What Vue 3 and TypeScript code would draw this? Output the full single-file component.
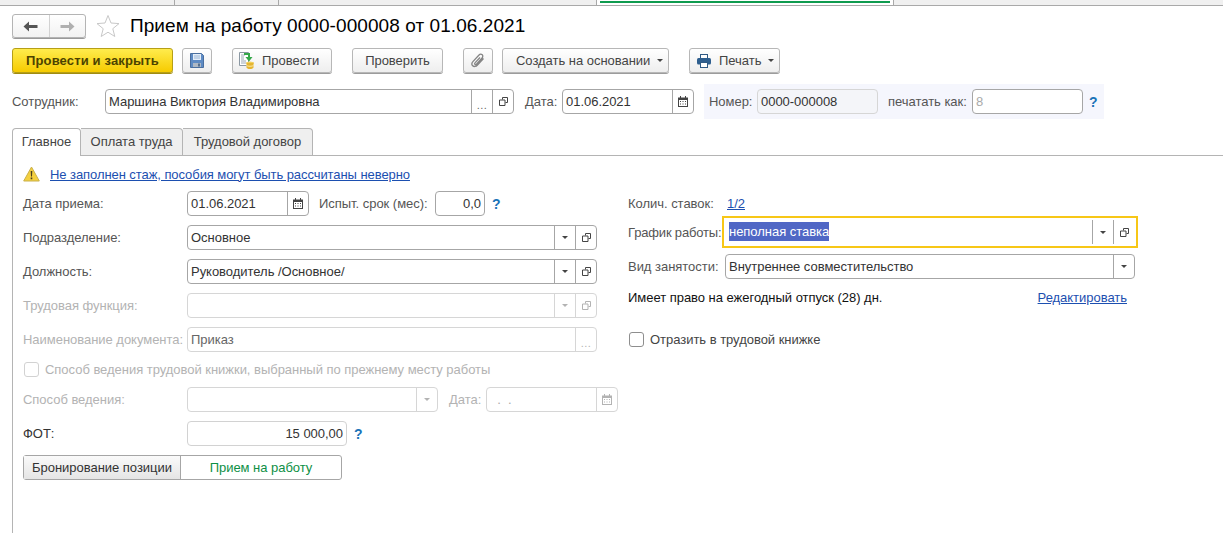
<script setup lang="ts">
const topTabs: number[] = [175, 104, 318, 297]
</script>

<template>
  <div class="page">
    <div class="strip">
      <div v-for="(w, i) in topTabs" :key="i" class="strip-tab" :class="{ current: i === 3 }" :style="{ width: w + 'px' }"><i v-if="i === 3"></i></div>
    </div>

    <div class="head">
      <div class="nav">
        <span class="nav-b">
          <svg width="15" height="11" viewBox="0 0 15 11"><path d="M0.500 5.500L6 .5v3.500h8.500v3H6v3.500z" fill="#555"/></svg>
        </span>
        <span class="nav-b">
          <svg width="15" height="11" viewBox="0 0 15 11"><path d="M14.500 5.500L9 .5v3.500H.5v3H9v3.500z" fill="#b0b0b0"/></svg>
        </span>
      </div>
      <svg class="star" width="24" height="24" viewBox="0 0 24 24"><path d="M12 1.500l3 7.500 8 .6-6.200 5.100 2 7.800L12 18.200l-6.800 4.300 2-7.800L1 9.600l8-.6z" fill="#fff" stroke="#c8c8c8"/></svg>
      <h1 class="title">Прием на работу 0000-000008 от 01.06.2021</h1>
    </div>

    <div class="toolbar">
      <button class="b primary" style="width:161px">Провести и закрыть</button>
      <button class="b" style="width:30px;margin-left:9px">
        <svg width="14" height="15" viewBox="0 0 14 15"><path d="M.5.5h11l2 2v12H.5z" fill="#5e8bc4" stroke="#4a6f9f"/><rect x="3" y="1" width="8" height="6" fill="#e3edf8"/><path d="M4 3h6M4 5h6" stroke="#9db6d4"/><rect x="3" y="10" width="8" height="4" fill="#aeb8c4"/><rect x="8" y="10.500" width="2" height="3" fill="#56708f"/></svg>
      </button>
      <button class="b start with-ic" style="width:100px;margin-left:20px">
        <svg width="17" height="17" viewBox="0 0 17 17"><path d="M.5.5h9v13h-9z" fill="#fff" stroke="#8b98a3"/><path d="M2 3h4M2 5h3M2 7h3M2 9h5M2 11h5" stroke="#9aa8b5"/><path d="M5 1h6v4h2.500l-3.500 4.500L6.500 5H9V3H5z" fill="#35a84a"/><path d="M7 10.500h8v1H7z" fill="#e9c04a"/><ellipse cx="11" cy="11" rx="3.500" ry="1.500" fill="#f1cf5c"/><path d="M7.500 11v4.500c0 .8 1.600 1.500 3.500 1.500s3.500-.7 3.500-1.500V11z" fill="#e5b530"/><path d="M7.500 13.500c1 1 6 1 7 0" stroke="#fbe9a6" fill="none"/></svg>
        <span>Провести</span>
      </button>
      <button class="b" style="width:91px;margin-left:20px">Проверить</button>
      <button class="b" style="width:30px;margin-left:20px">
        <svg width="14" height="15" viewBox="0 0 14 15"><path d="M12.500 5.500L6.500 12c-1.500 1.700-3.700 1.900-4.800.8-1.100-1.100-.9-3 .4-4.400l5.700-6.100c1-1.100 2.500-1.300 3.400-.5.900.8.700 2.300-.3 3.400L5.600 11c-.6.600-1.300.7-1.700.3-.4-.4-.3-1.100.3-1.700L9 4.500" fill="none" stroke="#858585" stroke-width="1.300"/></svg>
      </button>
      <button class="b start with-menu create" style="width:167px;margin-left:9px">
        <span>Создать на основании</span><i class="tri"></i>
      </button>
      <button class="b start with-menu print" style="width:91px;margin-left:20px">
        <svg width="14" height="14" viewBox="0 0 14 14"><rect x="3.500" y=".5" width="7" height="4" fill="#fff" stroke="#2f5a85"/><rect x="0" y="4" width="14" height="6.500" rx="1.500" fill="#2f5f8f"/><rect x="3.500" y="8.500" width="7" height="5" fill="#fff" stroke="#2f5a85"/></svg>
        <span class="print-t">Печать</span><i class="tri"></i>
      </button>
    </div>

    <div class="doc-row">
      <label class="lab emp-l">Сотрудник:</label>
      <div class="f" style="width:409px">
        <span class="v">Маршина Виктория Владимировна</span>
        <span class="s dots">...</span>
        <span class="s"><svg class="pick" width="9" height="9" viewBox="0 0 9 9"><path d="M3.500 2.500V.5h5v5H6.500M.5 3h5.500v5.500H.5z" fill="none" stroke="currentColor"/></svg></span>
      </div>
      <label class="lab" style="margin-left:11px;width:37px">Дата:</label>
      <div class="f" style="width:132px">
        <span class="v">01.06.2021</span>
        <span class="s"><svg class="cal" width="10" height="11" viewBox="0 0 10 11"><path d="M0 1.500h10V11H0z" fill="currentColor"/><path d="M2 0h1v2H2zM7 0h1v2H7z" fill="currentColor"/><path d="M1 4h8v6H1z" fill="#fff"/><path d="M2 5h1v1H2zM4.500 5h1v1h-1zM7 5h1v1H7zM2 7.500h1v1H2zM4.500 7.500h1v1h-1zM7 7.500h1v1H7z" fill="currentColor"/></svg></span>
      </div>
      <div class="shade">
        <label class="lab" style="width:48px">Номер:</label>
        <div class="f ro" style="width:121px"><span class="v">0000-000008</span></div>
        <label class="lab" style="margin-left:10px;width:84px">печатать как:</label>
        <div class="f" style="width:111px"><span class="v mute">8</span></div>
        <span class="q" style="margin-left:6px">?</span>
      </div>
    </div>

    <div class="tabs">
      <div class="tab active" style="width:69px">Главное</div>
      <div class="tab" style="width:102px">Оплата труда</div>
      <div class="tab" style="width:130px">Трудовой договор</div>
      <div class="tab-rest"></div>
    </div>

    <div class="panel">
      <div class="warn">
        <svg width="17" height="16" viewBox="0 0 17 16"><path d="M8.500 1L16.300 15H.7z" fill="#f4d03f" stroke="#c9b04a" stroke-linejoin="round"/><path d="M7.700 5h1.600l-.3 5.500h-1zM7.700 11.500h1.600v1.700H7.700z" fill="#4a4020"/></svg>
        <a class="lnk">Не заполнен стаж, пособия могут быть рассчитаны неверно</a>
      </div>

      <div class="cols">
        <div class="left">
          <div class="row" style="margin-top:0">
            <label class="lab fl">Дата приема:</label>
            <div class="f" style="width:122px">
              <span class="v">01.06.2021</span>
              <span class="s"><svg class="cal" width="10" height="11" viewBox="0 0 10 11"><path d="M0 1.500h10V11H0z" fill="currentColor"/><path d="M2 0h1v2H2zM7 0h1v2H7z" fill="currentColor"/><path d="M1 4h8v6H1z" fill="#fff"/><path d="M2 5h1v1H2zM4.500 5h1v1h-1zM7 5h1v1H7zM2 7.500h1v1H2zM4.500 7.500h1v1h-1zM7 7.500h1v1H7z" fill="currentColor"/></svg></span>
            </div>
            <label class="lab" style="margin-left:10px;width:116px">Испыт. срок (мес):</label>
            <div class="f" style="width:50px"><span class="v num">0,0</span></div>
            <span class="q" style="margin-left:7px">?</span>
          </div>

          <div class="row">
            <label class="lab fl">Подразделение:</label>
            <div class="f" style="width:410px">
              <span class="v">Основное</span>
              <span class="s"><i class="tri"></i></span>
              <span class="s"><svg class="pick" width="9" height="9" viewBox="0 0 9 9"><path d="M3.500 2.500V.5h5v5H6.500M.5 3h5.500v5.500H.5z" fill="none" stroke="currentColor"/></svg></span>
            </div>
          </div>

          <div class="row">
            <label class="lab fl">Должность:</label>
            <div class="f" style="width:410px">
              <span class="v">Руководитель /Основное/</span>
              <span class="s"><i class="tri"></i></span>
              <span class="s"><svg class="pick" width="9" height="9" viewBox="0 0 9 9"><path d="M3.500 2.500V.5h5v5H6.500M.5 3h5.500v5.500H.5z" fill="none" stroke="currentColor"/></svg></span>
            </div>
          </div>

          <div class="row off">
            <label class="lab fl">Трудовая функция:</label>
            <div class="f" style="width:410px">
              <span class="v"></span>
              <span class="s"><i class="tri"></i></span>
              <span class="s"><svg class="pick" width="9" height="9" viewBox="0 0 9 9"><path d="M3.500 2.500V.5h5v5H6.500M.5 3h5.500v5.500H.5z" fill="none" stroke="currentColor"/></svg></span>
            </div>
          </div>

          <div class="row off">
            <label class="lab fl">Наименование документа:</label>
            <div class="f" style="width:410px">
              <span class="v keep">Приказ</span>
              <span class="s dots">...</span>
            </div>
          </div>

          <div class="check off-check">
            <span class="box"></span>
            <span>Способ ведения трудовой книжки, выбранный по прежнему месту работы</span>
          </div>

          <div class="row off" style="margin-top:11px">
            <label class="lab fl">Способ ведения:</label>
            <div class="f" style="width:251px">
              <span class="v"></span>
              <span class="s"><i class="tri"></i></span>
            </div>
            <label class="lab" style="margin-left:11px;width:37px">Дата:</label>
            <div class="f" style="width:132px">
              <span class="v">&nbsp;&nbsp;.&nbsp;&nbsp;.</span>
              <span class="s"><svg class="cal" width="10" height="11" viewBox="0 0 10 11"><path d="M0 1.500h10V11H0z" fill="currentColor"/><path d="M2 0h1v2H2zM7 0h1v2H7z" fill="currentColor"/><path d="M1 4h8v6H1z" fill="#fff"/><path d="M2 5h1v1H2zM4.500 5h1v1h-1zM7 5h1v1H7zM2 7.500h1v1H2zM4.500 7.500h1v1h-1zM7 7.500h1v1H7z" fill="currentColor"/></svg></span>
            </div>
          </div>

          <div class="row">
            <label class="lab fl dark">ФОТ:</label>
            <div class="f light" style="width:160px"><span class="v num">15 000,00</span></div>
            <span class="q" style="margin-left:7px">?</span>
          </div>

          <div class="seg">
            <span class="seg-a">Бронирование позиции</span>
            <span class="seg-b">Прием на работу</span>
          </div>
        </div>

        <div class="right">
          <div class="r-top">
            <label class="lab" style="width:99px">Колич. ставок:</label>
            <a class="lnk">1/2</a>
          </div>
          <div class="r-focus">
            <label class="lab tight" style="width:94px">График работы:</label>
            <div class="focus">
              <span class="v"><span class="sel">неполная ставка</span></span>
              <span class="s"><i class="tri"></i></span>
              <span class="s"><svg class="pick" width="9" height="9" viewBox="0 0 9 9"><path d="M3.500 2.500V.5h5v5H6.500M.5 3h5.500v5.500H.5z" fill="none" stroke="currentColor"/></svg></span>
            </div>
          </div>
          <div class="r-kind">
            <label class="lab" style="width:97px">Вид занятости:</label>
            <div class="f" style="width:410px">
              <span class="v">Внутреннее совместительство</span>
              <span class="s"><i class="tri"></i></span>
            </div>
          </div>
          <div class="r-vac">
            <span class="black">Имеет право на ежегодный отпуск (28) дн.</span>
            <a class="lnk">Редактировать</a>
          </div>
          <div class="check r-check">
            <span class="box strong"></span>
            <span>Отразить в трудовой книжке</span>
          </div>
        </div>
      </div>
    </div>
  </div>
</template>

<style>
html, body { margin: 0; background: #fff; overflow: hidden; }
</style>

<style scoped>
.page { width: 1223px; height: 533px; overflow: hidden; background: #fff; font: 13px "Liberation Sans", Arial, sans-serif; color: #3d3d3d; letter-spacing: -.03px; }
.strip { display: flex; height: 5px; background: #f0f0f0; border-bottom: 1px solid #a9a9a9; }
.strip-tab { box-sizing: border-box; height: 6px; border-right: 1px solid #a9a9a9; }
.strip-tab.current { background: #fff; padding: 1px 3px 0; height: 5px; }
.strip-tab.current i { display: block; height: 2px; background: #0f9b4f; }
.head { display: flex; align-items: center; height: 24px; margin-top: 8px; padding-left: 12px; }
.nav { display: flex; width: 74px; height: 24px; box-sizing: border-box; border: 1px solid #b4b4b4; border-radius: 3px; background: linear-gradient(#fff, #f2f2f2); box-shadow: 0 1px 0 #999; }
.nav-b { flex: 1; display: flex; align-items: center; justify-content: center; }
.nav-b + .nav-b { border-left: 1px solid #d2d2d2; }
.star { margin-left: 10px; }
.title { margin: 0 0 0 10px; font-size: 19px; font-weight: 400; color: #000; letter-spacing: .07px; white-space: nowrap; }
.toolbar { display: flex; height: 26px; margin-top: 10px; padding-left: 12px; }
.b { box-sizing: border-box; height: 25px; padding: 0; display: inline-flex; align-items: center; justify-content: center; border: 1px solid #b7b7b7; border-radius: 3px; background: linear-gradient(#fff, #eeeeee); box-shadow: 0 1px 0 #9c9c9c; font: inherit; letter-spacing: inherit; color: #444; white-space: nowrap; }
.b.start { justify-content: flex-start; padding-left: 6px; }
.b.create { padding-left: 13px; }
.b.print { padding-left: 7px; }
.b.primary { background: linear-gradient(#ffec4d, #f6cb00); border-color: #b69f16; box-shadow: 0 1px 0 #a18c10; color: #4c4300; font-weight: 700; letter-spacing: .15px; }
.with-ic span { margin-left: 6px; }
.with-menu .tri { margin-left: 7px; }
.print-t { margin-left: 8px; }
.tri { display: inline-block; width: 0; height: 0; border: 3px solid transparent; border-top: 3px solid currentColor; border-bottom: 0; }
.doc-row { display: flex; align-items: center; height: 35px; margin-top: 10px; padding-left: 12px; }
.lab { display: inline-block; flex: none; color: #555; white-space: nowrap; }
.lab.tight { letter-spacing: -.17px; }
.emp-l { width: 93px; }
.f { box-sizing: border-box; height: 25px; display: flex; flex: none; border: 1px solid #a6a6a6; border-radius: 4px; background: #fff; color: #333; }
.f.ro { background: #f4f5f9; border-color: #d6d6d6; }
.f.light { border-color: #d2d2d2; }
.v { flex: 1; min-width: 0; padding: 0 3px; line-height: 24px; white-space: nowrap; }
.v.num { text-align: right; }
.v.mute { color: #aaa; }
.s { box-sizing: border-box; flex: none; width: 21px; display: flex; align-items: center; justify-content: center; border-left: 1px solid #a6a6a6; color: #444; }
.s.dots { line-height: 10px; align-items: flex-end; padding-bottom: 3px; font-size: 11px; color: #666; letter-spacing: .5px; }
.shade { display: flex; align-items: center; height: 35px; width: 395px; margin-left: 10px; padding-left: 5px; background: #f5f6fd; }
.q { color: #1a73b8; font-weight: 700; font-size: 14px; }
.tabs { display: flex; height: 28px; margin-top: 9px; padding-left: 12px; }
.tab { box-sizing: border-box; height: 28px; padding-top: 5px; text-align: center; background: #efefef; border: 1px solid #b4b4b4; border-left: 0; border-radius: 0 4px 0 0; color: #444; }
.tab.active { background: #fff; border-left: 1px solid #b4b4b4; border-bottom: 0; border-radius: 4px 4px 0 0; }
.tab-rest { flex: 1; border-bottom: 1px solid #b4b4b4; }
.panel { margin-left: 12px; height: 400px; border-left: 1px solid #b4b4b4; padding-left: 10px; }
.warn { display: flex; align-items: center; height: 20px; padding-top: 8px; }
.warn svg { margin-right: 10px; }
.lnk { color: #1c4fb0; text-decoration: underline; white-space: nowrap; }
.warn .lnk { letter-spacing: -.07px; }
.cols { display: flex; margin-top: 7px; }
.left { width: 605px; flex: none; }
.row { display: flex; align-items: center; height: 25px; margin-top: 9px; }
.fl { width: 164px; }
.lab.dark { color: #333; }
.row.off .lab { color: #b3b3b3; }
.row.off .f { border-color: #d6d6d6; color: #aaa; }
.row.off .s { border-left-color: #d6d6d6; color: #b3b3b3; }
.row.off .keep { color: #666; }
.check { display: flex; align-items: center; white-space: nowrap; }
.off-check { height: 14px; margin-top: 10px; padding-left: 1px; color: #b3b3b3; }
.box { box-sizing: border-box; width: 15px; height: 15px; margin-right: 6px; border: 1px solid #d2d2d2; border-radius: 3px; background: #fff; }
.box.strong { border-color: #8e8e8e; }
.seg { display: flex; width: 319px; height: 25px; margin-top: 9px; box-sizing: border-box; border: 1px solid #a6a6a6; border-radius: 3px; }
.seg-a { box-sizing: border-box; width: 157px; line-height: 23px; text-align: center; background: linear-gradient(#fafafa, #e5e5e5); border-right: 1px solid #a6a6a6; color: #333; }
.seg-b { flex: 1; line-height: 23px; text-align: center; color: #0e8f45; }
.right { flex: 1; padding-left: 0; }
.r-top { display: flex; align-items: center; height: 20px; margin-top: 2px; }
.r-focus { display: flex; align-items: center; height: 32px; margin-top: 3px; }
.focus { box-sizing: border-box; display: flex; width: 416px; height: 32px; padding: 2px 2px 2px 0; border: 2px solid #f7c716; background: #fff; color: #333; }
.focus .v { line-height: 24px; padding-left: 5px; }
.focus .s { border-left-color: #a6a6a6; }
.sel { background: #5067c5; color: #fff; padding: 2px 0; }
.r-kind { display: flex; align-items: center; height: 25px; margin-top: 6px; }
.r-vac { display: flex; height: 20px; align-items: center; margin-top: 8px; width: 499px; justify-content: space-between; }
.black { color: #111; }
.r-check { height: 15px; margin-top: 25px; padding-left: 1px; color: #444; }
</style>
